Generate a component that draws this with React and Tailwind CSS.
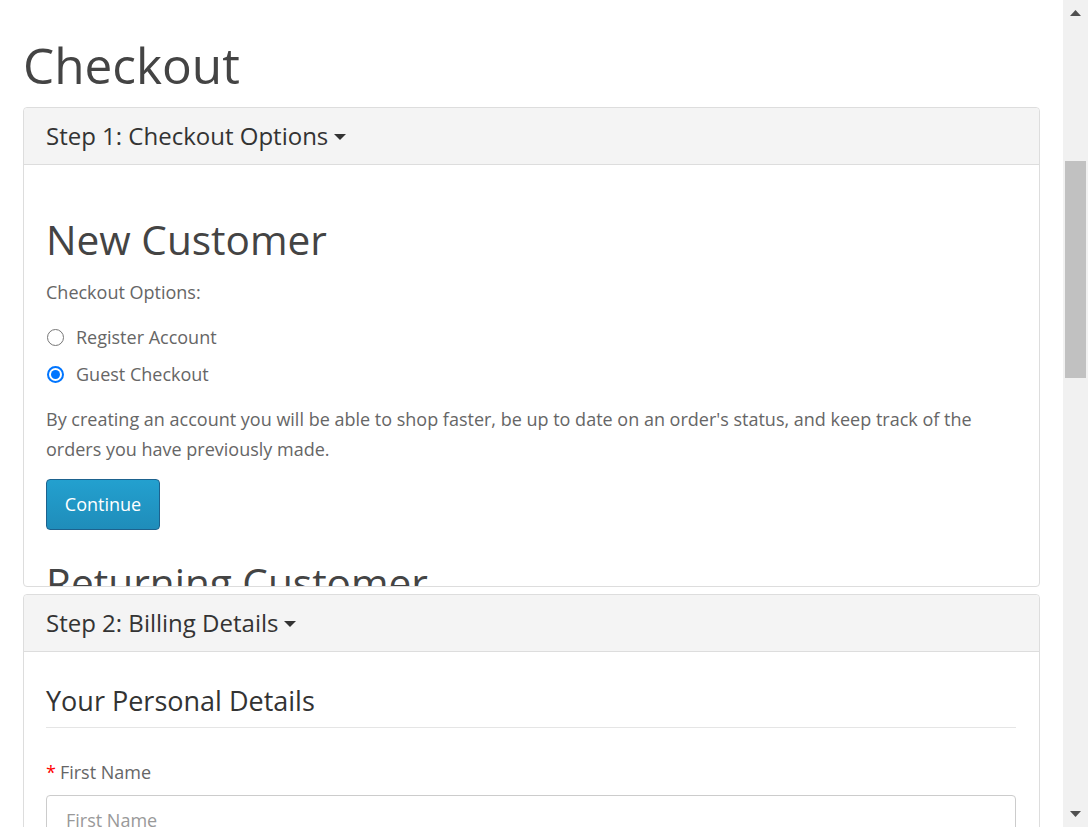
export default function App() {
  return (
    <div className="flex h-[827px] w-[1088px] overflow-hidden bg-white font-['Open_Sans',sans-serif]">
      <div className="h-full w-[1063px] overflow-hidden px-[23px] pt-[38px]">
        <h1 className="text-[49.5px] leading-[1.1] text-[#444] mb-[15px]">Checkout</h1>

        {/* Panel 1 */}
        <div className="rounded-[4px] border border-[#ddd] bg-white">
          <div className="flex h-[57px] items-center border-b border-[#ddd] bg-[#f4f4f4] px-[22px] rounded-t-[4px]">
            <span className="text-[24px] leading-[1.2] text-[#333]">Step 1: Checkout Options</span>
            <Caret />
          </div>
          <div className="h-[421px] overflow-hidden px-[22px] pt-[53px]">
            <h2 className="text-[40.6px] leading-[44px] text-[#444]">New Customer</h2>
            <p className="mt-[15px] text-[18px] leading-[30px] text-[#666]">Checkout Options:</p>
            <label className="mt-[15px] flex items-center h-[30px] text-[18px] leading-[30px] text-[#666]">
              <span className="ml-[1px] flex h-[17px] w-[17px] items-center justify-center rounded-full border-[1.5px] border-[#767676] bg-white" />
              <span className="ml-[12px]">Register Account</span>
            </label>
            <label className="mt-[7px] flex items-center h-[30px] text-[18px] leading-[30px] text-[#666]">
              <span className="ml-[1px] flex h-[17px] w-[17px] items-center justify-center rounded-full border-2 border-[#0075ff] bg-white">
                <span className="h-[9px] w-[9px] rounded-full bg-[#0075ff]" />
              </span>
              <span className="ml-[12px]">Guest Checkout</span>
            </label>
            <p className="mt-[15px] text-[18px] leading-[30px] text-[#666]">
              By creating an account you will be able to shop faster, be up to date on an order's status, and keep track of the orders you have previously made.
            </p>
            <button className="mt-[15px] flex h-[51px] w-[114px] items-center justify-center rounded-[4px] border border-[#1d628e] bg-gradient-to-b from-[#23a0cf] to-[#1f8dba] text-[18px] text-white">
              Continue
            </button>
            <h2 className="mt-[31px] text-[40.6px] leading-[44px] text-[#444]">Returning Customer</h2>
          </div>
        </div>

        {/* Panel 2 */}
        <div className="mt-[7px] rounded-[4px] border border-[#ddd] bg-white">
          <div className="flex h-[57px] items-center border-b border-[#ddd] bg-[#f4f4f4] px-[22px] rounded-t-[4px]">
            <span className="text-[24px] leading-[1.2] text-[#333]">Step 2: Billing Details</span>
            <Caret />
          </div>
          <div className="px-[22px] pr-[23px] pt-[31px]">
            <div className="border-b border-[#e5e5e5] pb-[8px] text-[27px] leading-[36px] text-[#333]">Your Personal Details</div>
            <div className="mt-[29px] text-[18px] leading-[30px] text-[#666]">
              <span className="text-[#f00] mr-[4px]">*</span>First Name
            </div>
            <div className="mt-[8px] flex h-[50px] items-center rounded-[4px] border border-[#ccc] px-[19px] text-[18px] text-[#999]">
              First Name
            </div>
          </div>
        </div>
      </div>

      {/* fake scrollbar */}
      <div className="relative h-full w-[25px] bg-[#f1f1f1]">
        <svg className="absolute left-[7px] top-[10px]" width="11" height="6" viewBox="0 0 11 6">
          <polygon points="0,6 11,6 5.5,0" fill="#505050" />
        </svg>
        <div className="absolute left-[2px] top-[161px] h-[217px] w-[21px] bg-[#c1c1c1]" />
        <svg className="absolute left-[7px] top-[811px]" width="11" height="6" viewBox="0 0 11 6">
          <polygon points="0,0 11,0 5.5,6" fill="#505050" />
        </svg>
      </div>
    </div>
  );
}

function Caret() {
  return (
    <svg className="ml-[6px] mt-[2px]" width="12" height="6" viewBox="0 0 12 6">
      <polygon points="0,0 12,0 6,6" fill="#333" />
    </svg>
  );
}
